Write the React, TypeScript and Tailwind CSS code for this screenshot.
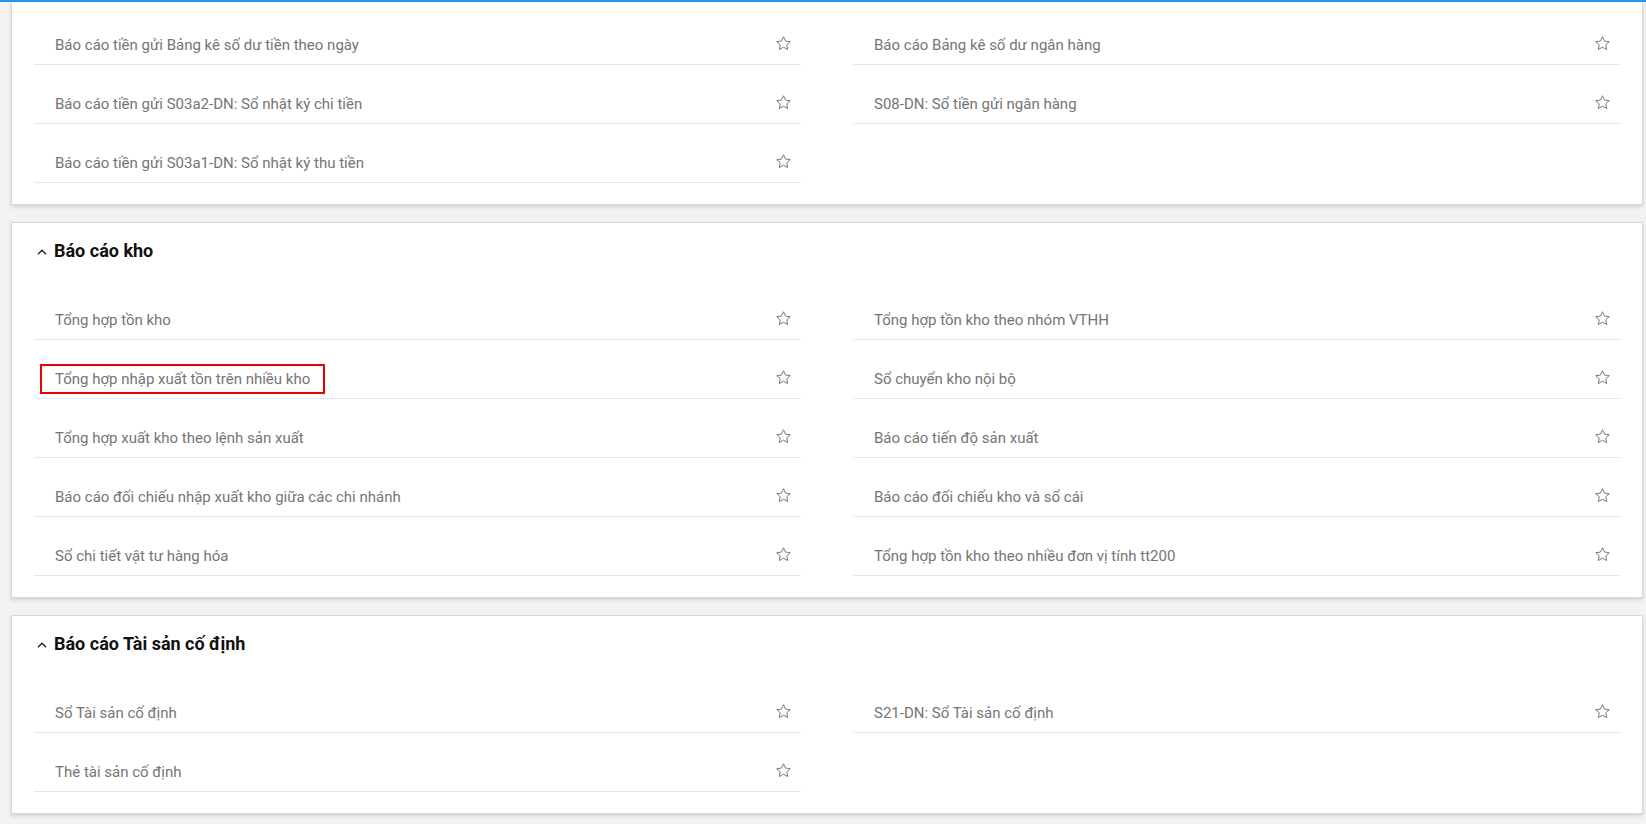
import React from "react";

type Item = { label: string; highlight?: boolean };

const StarIcon = () => (
  <svg width="17" height="17" viewBox="0 0 24 24" className="shrink-0">
    <polygon
      points="12,2.5 14.9,8.6 21.5,9.4 16.6,13.9 17.9,20.5 12,17.2 6.1,20.5 7.4,13.9 2.5,9.4 9.1,8.6"
      fill="none"
      stroke="#777777"
      strokeWidth="1.4"
      strokeLinejoin="miter"
    />
  </svg>
);

const Chevron = () => (
  <svg width="10" height="6" viewBox="0 0 10 6" className="shrink-0">
    <polyline points="1,5.2 5,1.2 9,5.2" fill="none" stroke="#222" strokeWidth="1.4" />
  </svg>
);

const Row = ({ item }: { item: Item }) => (
  <div className="flex items-start justify-between pt-[28px] pb-[8px] pl-[21px] pr-[9px] border-b border-[#e4e4f2]">
    <span className="relative text-[15px] leading-[22px] text-[#757575]">
      {item.label}
      {item.highlight && (
        <span className="absolute -left-[15px] -right-[15px] -top-[4px] -bottom-[4px] border-2 border-[#ee0000]" />
      )}
    </span>
    <span className="mt-[1px]">
      <StarIcon />
    </span>
  </div>
);

const Columns = ({ left, right }: { left: Item[]; right: Item[] }) => (
  <div className="grid grid-cols-2 gap-x-[52px]">
    <div className="flex flex-col">
      {left.map((it) => (
        <Row key={it.label} item={it} />
      ))}
    </div>
    <div className="flex flex-col">
      {right.map((it) => (
        <Row key={it.label} item={it} />
      ))}
    </div>
  </div>
);

const Card = ({
  title,
  left,
  right,
}: {
  title: string;
  left: Item[];
  right: Item[];
}) => (
  <div className="bg-white border border-[#d8d8d8] shadow-[0_2px_4px_rgba(0,0,0,0.14)] px-[22px] pt-[16px] pb-[21px]">
    <div className="flex items-center h-[24px] mb-[18px] pl-[3px] gap-[7px]">
      <span className="mt-[2px]">
        <Chevron />
      </span>
      <span className="text-[18px] leading-[24px] font-bold text-[#111]">{title}</span>
    </div>
    <Columns left={left} right={right} />
  </div>
);

export default function App() {
  return (
    <div
      className="h-[824px] overflow-hidden bg-[#f3f3f3] border-t-2 border-[#2196f3] pl-[11px] pr-[3px]"
      style={{ fontFamily: "Roboto, 'Noto Sans', Arial, sans-serif" }}
    >
      <div className="flex flex-col gap-[17px]">
        <div className="bg-white border border-t-0 border-[#d8d8d8] shadow-[0_2px_4px_rgba(0,0,0,0.14)] px-[22px] pt-[4px] pb-[21px]">
          <Columns
            left={[
              { label: "Báo cáo tiền gửi Bảng kê số dư tiền theo ngày" },
              { label: "Báo cáo tiền gửi S03a2-DN: Sổ nhật ký chi tiền" },
              { label: "Báo cáo tiền gửi S03a1-DN: Sổ nhật ký thu tiền" },
            ]}
            right={[
              { label: "Báo cáo Bảng kê số dư ngân hàng" },
              { label: "S08-DN: Sổ tiền gửi ngân hàng" },
            ]}
          />
        </div>
        <Card
          title="Báo cáo kho"
          left={[
            { label: "Tổng hợp tồn kho" },
            { label: "Tổng hợp nhập xuất tồn trên nhiều kho", highlight: true },
            { label: "Tổng hợp xuất kho theo lệnh sản xuất" },
            { label: "Báo cáo đối chiếu nhập xuất kho giữa các chi nhánh" },
            { label: "Sổ chi tiết vật tư hàng hóa" },
          ]}
          right={[
            { label: "Tổng hợp tồn kho theo nhóm VTHH" },
            { label: "Sổ chuyển kho nội bộ" },
            { label: "Báo cáo tiến độ sản xuất" },
            { label: "Báo cáo đối chiếu kho và sổ cái" },
            { label: "Tổng hợp tồn kho theo nhiều đơn vị tính tt200" },
          ]}
        />
        <Card
          title="Báo cáo Tài sản cố định"
          left={[{ label: "Sổ Tài sản cố định" }, { label: "Thẻ tài sản cố định" }]}
          right={[{ label: "S21-DN: Sổ Tài sản cố định" }]}
        />
      </div>
    </div>
  );
}
